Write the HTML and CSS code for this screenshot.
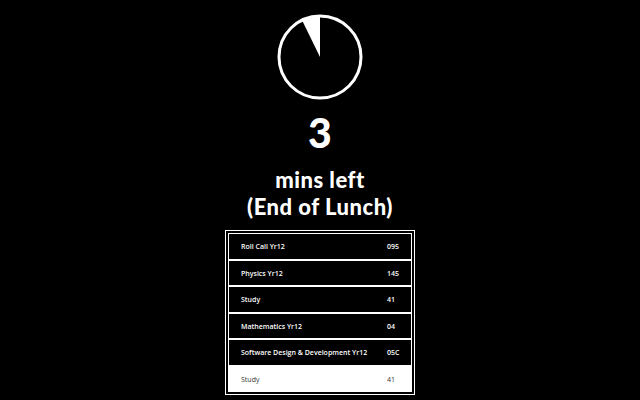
FILE: index.html
```html
<!DOCTYPE html>
<html>
<head>
<meta charset="utf-8">
<link rel="stylesheet" href="styles.css">
</head>
<body>
<main class="page">
  <svg class="clock" width="86" height="86" viewBox="0 0 86 86">
    <path class="wedge" d="M43 43 L43 2 A41 41 0 0 0 25.03 6.15 Z"/>
    <circle class="ring" cx="43" cy="43" r="41"/>
  </svg>
  <div class="count">3</div>
  <div class="label">mins left<br>(End of Lunch)</div>
  <div class="timetable">
    <div class="row"><span class="subject">Roll Call Yr12</span><span class="room">095</span></div>
    <div class="row"><span class="subject">Physics Yr12</span><span class="room">145</span></div>
    <div class="row"><span class="subject">Study</span><span class="room">41</span></div>
    <div class="row"><span class="subject">Mathematics Yr12</span><span class="room">04</span></div>
    <div class="row"><span class="subject">Software Design &amp; Development Yr12</span><span class="room">05C</span></div>
    <div class="row current"><span class="subject">Study</span><span class="room">41</span></div>
  </div>
</main>
</body>
</html>
```
FILE: styles.css
```css
html, body {
  margin: 0;
  padding: 0;
  background: #000;
}
.page {
  display: flex;
  flex-direction: column;
  align-items: center;
  width: 640px;
  height: 400px;
  overflow: hidden;
  color: #fff;
  font-family: "Lato", "Open Sans", sans-serif;
}
.clock {
  display: block;
  margin-top: 14px;
}
.ring {
  fill: none;
  stroke: #fff;
  stroke-width: 3;
}
.wedge {
  fill: #fff;
}
.count {
  margin-top: 13px;
  font-size: 41px;
  line-height: 40px;
  font-weight: 900;
}
.label {
  margin-top: 14px;
  font-size: 22px;
  line-height: 26.5px;
  font-weight: 900;
  letter-spacing: 0.5px;
  text-align: center;
}
.timetable {
  margin-top: 10px;
  width: 190px;
  box-sizing: border-box;
  border: 1px solid #fff;
  padding: 2px;
  display: flex;
  flex-direction: column;
}
.row {
  height: 26.5px;
  box-sizing: border-box;
  border: 1px solid #fff;
  display: flex;
  align-items: center;
  padding-left: 12px;
  padding-top: 1px;
  font-family: "Open Sans", sans-serif;
  font-size: 7px;
  font-weight: 600;
  color: #fff;
  background: #000;
}
.subject {
  flex: 1;
}
.room {
  width: 24px;
}
.row.current {
  background: #fff;
  color: #333;
  font-weight: 400;
}
```
